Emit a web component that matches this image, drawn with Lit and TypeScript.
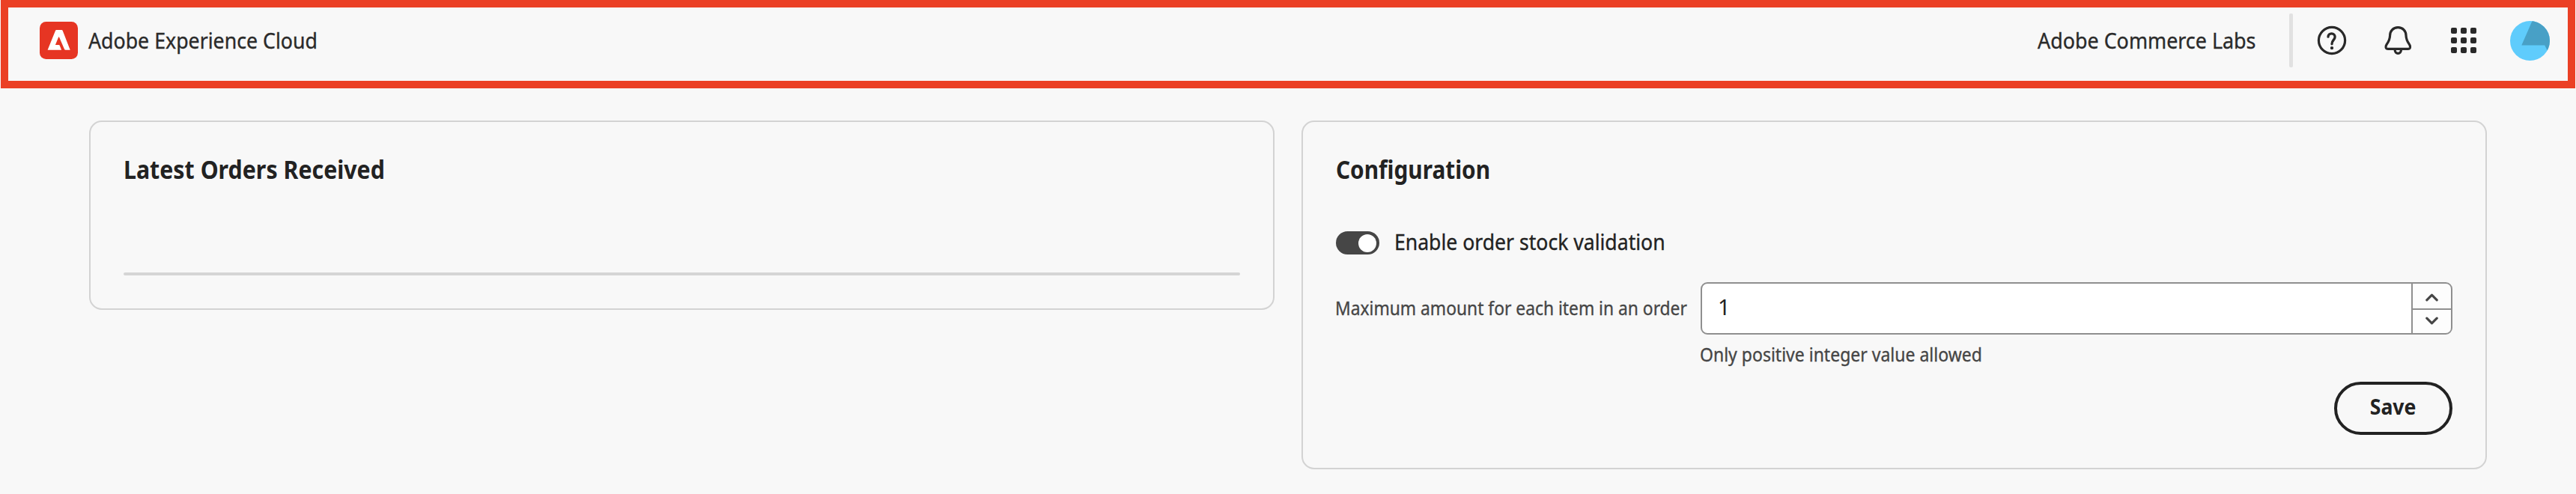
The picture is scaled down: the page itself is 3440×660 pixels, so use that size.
import { LitElement, html, css, svg } from "lit";
import { customElement, property, state } from "lit/decorators.js";

const logo = html`<svg class="logo" viewBox="0 0 51 50" width="51" height="50">
  <rect width="51" height="50" rx="8.5" fill="#e63523" />
  <path
    fill="#fff"
    d="M22.4 10.9H29.2Q30.3 10.9 30.7 11.9L40.7 37.8H34.7Q33.4 37.8 32.9 36.6L26.2 20.9Q25.6 19.8 25 20.9L20.9 31H25.6Q26.4 31 26.7 31.7L29.1 37.8H10.6L21 11.9Q21.4 10.9 22.4 10.9Z"
  />
</svg>`;

const helpIcon = html`<svg class="icon" viewBox="0 0 40 40" width="40" height="40">
  <circle cx="20" cy="20" r="17.6" fill="none" stroke="#292929" stroke-width="3.2" />
  <path
    d="M15 15.2C15 12.6 17 10.8 19.6 10.8C22.3 10.8 24.1 12.7 24.1 15.2C24.1 19.4 20 19.6 20 24.8"
    fill="none" stroke="#292929" stroke-width="3.3" stroke-linecap="round"
  />
  <circle cx="20" cy="30.1" r="2.2" fill="#292929" />
</svg>`;

const bellIcon = html`<svg class="icon" viewBox="0 0 40 40" width="40" height="40">
  <path
    d="M20.3 2.6C13.6 2.6 9.7 7.6 9.6 13.2C9.5 19.2 7.6 21.8 5.1 25.4C3.9 27.2 3.9 28.4 4.1 29.3C4.5 30.8 5.7 31.4 7.2 31.4H33.4C34.9 31.4 36.1 30.8 36.5 29.3C36.7 28.4 36.7 27.2 35.5 25.4C33 21.8 31.1 19.2 31 13.2C30.9 7.6 27 2.6 20.3 2.6Z"
    fill="none" stroke="#292929" stroke-width="3.2" stroke-linejoin="round"
  />
  <path d="M16.2 32V33C16.2 35.6 18 37.3 20.3 37.3C22.6 37.3 24.4 35.6 24.4 33V32" fill="none" stroke="#292929" stroke-width="3.2" />
</svg>`;

const cells = [3, 16, 29];
const appsIcon = html`<svg class="icon" viewBox="0 0 40 40" width="40" height="40">
  ${cells.map((y) => cells.map((x) => svg`<rect x=${x} y=${y} width="8" height="8" rx="2" fill="#292929" />`))}
</svg>`;

const avatar = html`<svg class="avatar" viewBox="0 0 53 53" width="53" height="53">
  <clipPath id="disc"><circle cx="26.5" cy="26.5" r="26.5" /></clipPath>
  <circle cx="26.5" cy="26.5" r="26.5" fill="#5fccfc" />
  <path clip-path="url(#disc)" fill="#48a0c6" d="M29.5 0L15.3 32.5H46.2L50 40H53V0Z" />
</svg>`;

const chevron = (d: string) => html`<svg viewBox="0 0 17 11" width="17" height="11">
  <path d=${d} fill="none" stroke="#464646" stroke-width="3.2" stroke-linecap="round" stroke-linejoin="round" />
</svg>`;

/** Condensed text run: each class narrows the glyphs from their left edge. */
const labelStyles = css`
  .t {
    display: block;
    flex: none;
    white-space: nowrap;
    transform-origin: 0 50%;
    -webkit-text-stroke: 0.35px currentColor;
  }
`;

@customElement("cloud-header")
export class CloudHeader extends LitElement {
  static styles = [
    labelStyles,
    css`
      :host {
        display: flex;
        align-items: center;
        box-sizing: border-box;
        height: 118px;
        margin: 0 1px;
        padding: 0 24px 10px 42px;
        border: 10px solid #eb4025;
        font-size: 29.5px;
        line-height: 40px;
        color: #2a2a2a;
      }
      svg { display: block; flex: none; }
      .product { margin-left: 14px; transform: scaleX(0.906); }
      .org { width: 292px; margin-left: auto; transform: scaleX(0.911); }
      .rule {
        flex: none;
        width: 5px;
        height: 72px;
        margin: 0 32px 0 44px;
        border-radius: 2px;
        background: #e1e1e1;
      }
      .icon + .icon { margin-left: 48px; }
      .avatar { margin-left: 42px; }
    `,
  ];
  render() {
    return html`
      ${logo}
      <span class="t product">Adobe Experience Cloud</span>
      <span class="t org">Adobe Commerce Labs</span>
      <span class="rule"></span>
      ${helpIcon}${bellIcon}${appsIcon}${avatar}
    `;
  }
}

@customElement("info-card")
export class InfoCard extends LitElement {
  @property() heading = "";
  static styles = css`
    :host {
      display: block;
      box-sizing: border-box;
      padding: 44px;
      border: 2px solid #d3d3d3;
      border-radius: 17px;
    }
    h2 {
      margin: 0;
      font-size: 33.6px;
      line-height: 38px;
      font-weight: 700;
      color: #222;
      white-space: nowrap;
      transform: scaleX(0.903);
      transform-origin: 0 50%;
    }
    :host([heading="Configuration"]) h2 { transform: scaleX(0.887); }
  `;
  render() {
    return html`<h2>${this.heading}</h2><slot></slot>`;
  }
}

@customElement("config-form")
export class ConfigForm extends LitElement {
  @state() amount = 1;
  static styles = [
    labelStyles,
    css`
      :host { display: block; margin-top: 58px; }
      svg { display: block; }
      .switch { display: flex; height: 40px; }
      .track {
        display: flex;
        justify-content: flex-end;
        align-items: center;
        box-sizing: border-box;
        flex: none;
        width: 58px;
        height: 31px;
        margin-top: 6px;
        padding: 0 4px 0 0;
        border-radius: 16px;
        background: #464646;
      }
      .knob { width: 24px; height: 24px; border-radius: 50%; background: #fff; }
      .enable {
        margin-left: 20px;
        font-size: 29.5px;
        line-height: 40px;
        color: #222;
        transform: scaleX(0.901);
      }
      .field { display: grid; grid-template-columns: 487px 1fr; margin-top: 34px; }
      .name, .hint { font-size: 25px; color: #464646; }
      .name { width: 487px; margin-left: -1px; line-height: 69px; transform: scaleX(0.912); }
      .hint { grid-column: 2; line-height: 34px; margin-top: 9px; margin-left: -1px; transform: scaleX(0.92); }
      .stepper {
        display: flex;
        box-sizing: border-box;
        height: 70px;
        border: 2px solid #8f8f8f;
        border-radius: 9px;
        background: #fff;
        overflow: hidden;
      }
      .value {
        flex: 1;
        padding-left: 21px;
        font-size: 29px;
        line-height: 61px;
        color: #222;
      }
      .arrows {
        display: grid;
        grid-template-rows: 33px 31px;
        row-gap: 2px;
        width: 51px;
        border-left: 2px solid #8f8f8f;
        background: #8f8f8f;
      }
      .arrow { display: flex; align-items: center; justify-content: center; background: #fdfdfd; }
      .up { padding-top: 3px; }
      .down { padding-bottom: 2px; }
      .actions { display: flex; justify-content: flex-end; margin-top: 20px; }
      button {
        box-sizing: border-box;
        width: 158px;
        height: 71px;
        padding: 0 0 6px;
        border: 4px solid #222;
        border-radius: 36px;
        background: transparent;
        font: 700 29px "Noto Sans", sans-serif;
        color: #222;
      }
      .save { display: inline-block; transform: scaleX(0.917); }
    `,
  ];
  render() {
    return html`
      <div class="switch">
        <span class="track"><span class="knob"></span></span>
        <span class="t enable">Enable order stock validation</span>
      </div>
      <div class="field">
        <span class="t name">Maximum amount for each item in an order</span>
        <div class="stepper">
          <span class="value">${this.amount}</span>
          <span class="arrows">
            <span class="arrow up" @click=${() => this.amount++}>${chevron("M1.8 8.8L8.5 2.2L15.2 8.8")}</span>
            <span class="arrow down" @click=${() => (this.amount = Math.max(1, this.amount - 1))}>${chevron("M1.8 2.2L8.5 8.8L15.2 2.2")}</span>
          </span>
        </div>
        <span class="t hint">Only positive integer value allowed</span>
      </div>
      <div class="actions"><button><span class="save">Save</span></button></div>
    `;
  }
}

@customElement("app-root")
export class AppRoot extends LitElement {
  static styles = css`
    :host {
      display: block;
      min-height: 660px;
      background: #f8f8f8;
      font-family: "Noto Sans", sans-serif;
    }
    main {
      display: grid;
      grid-template-columns: 1583px 1583px;
      column-gap: 36px;
      align-items: start;
      padding: 43px 119px 33px;
    }
    .divider { height: 4px; margin-top: 119px; border-radius: 2px; background: #d5d5d5; }
  `;
  render() {
    return html`
      <cloud-header></cloud-header>
      <main>
        <info-card heading="Latest Orders Received"><div class="divider"></div></info-card>
        <info-card heading="Configuration"><config-form></config-form></info-card>
      </main>
    `;
  }
}
